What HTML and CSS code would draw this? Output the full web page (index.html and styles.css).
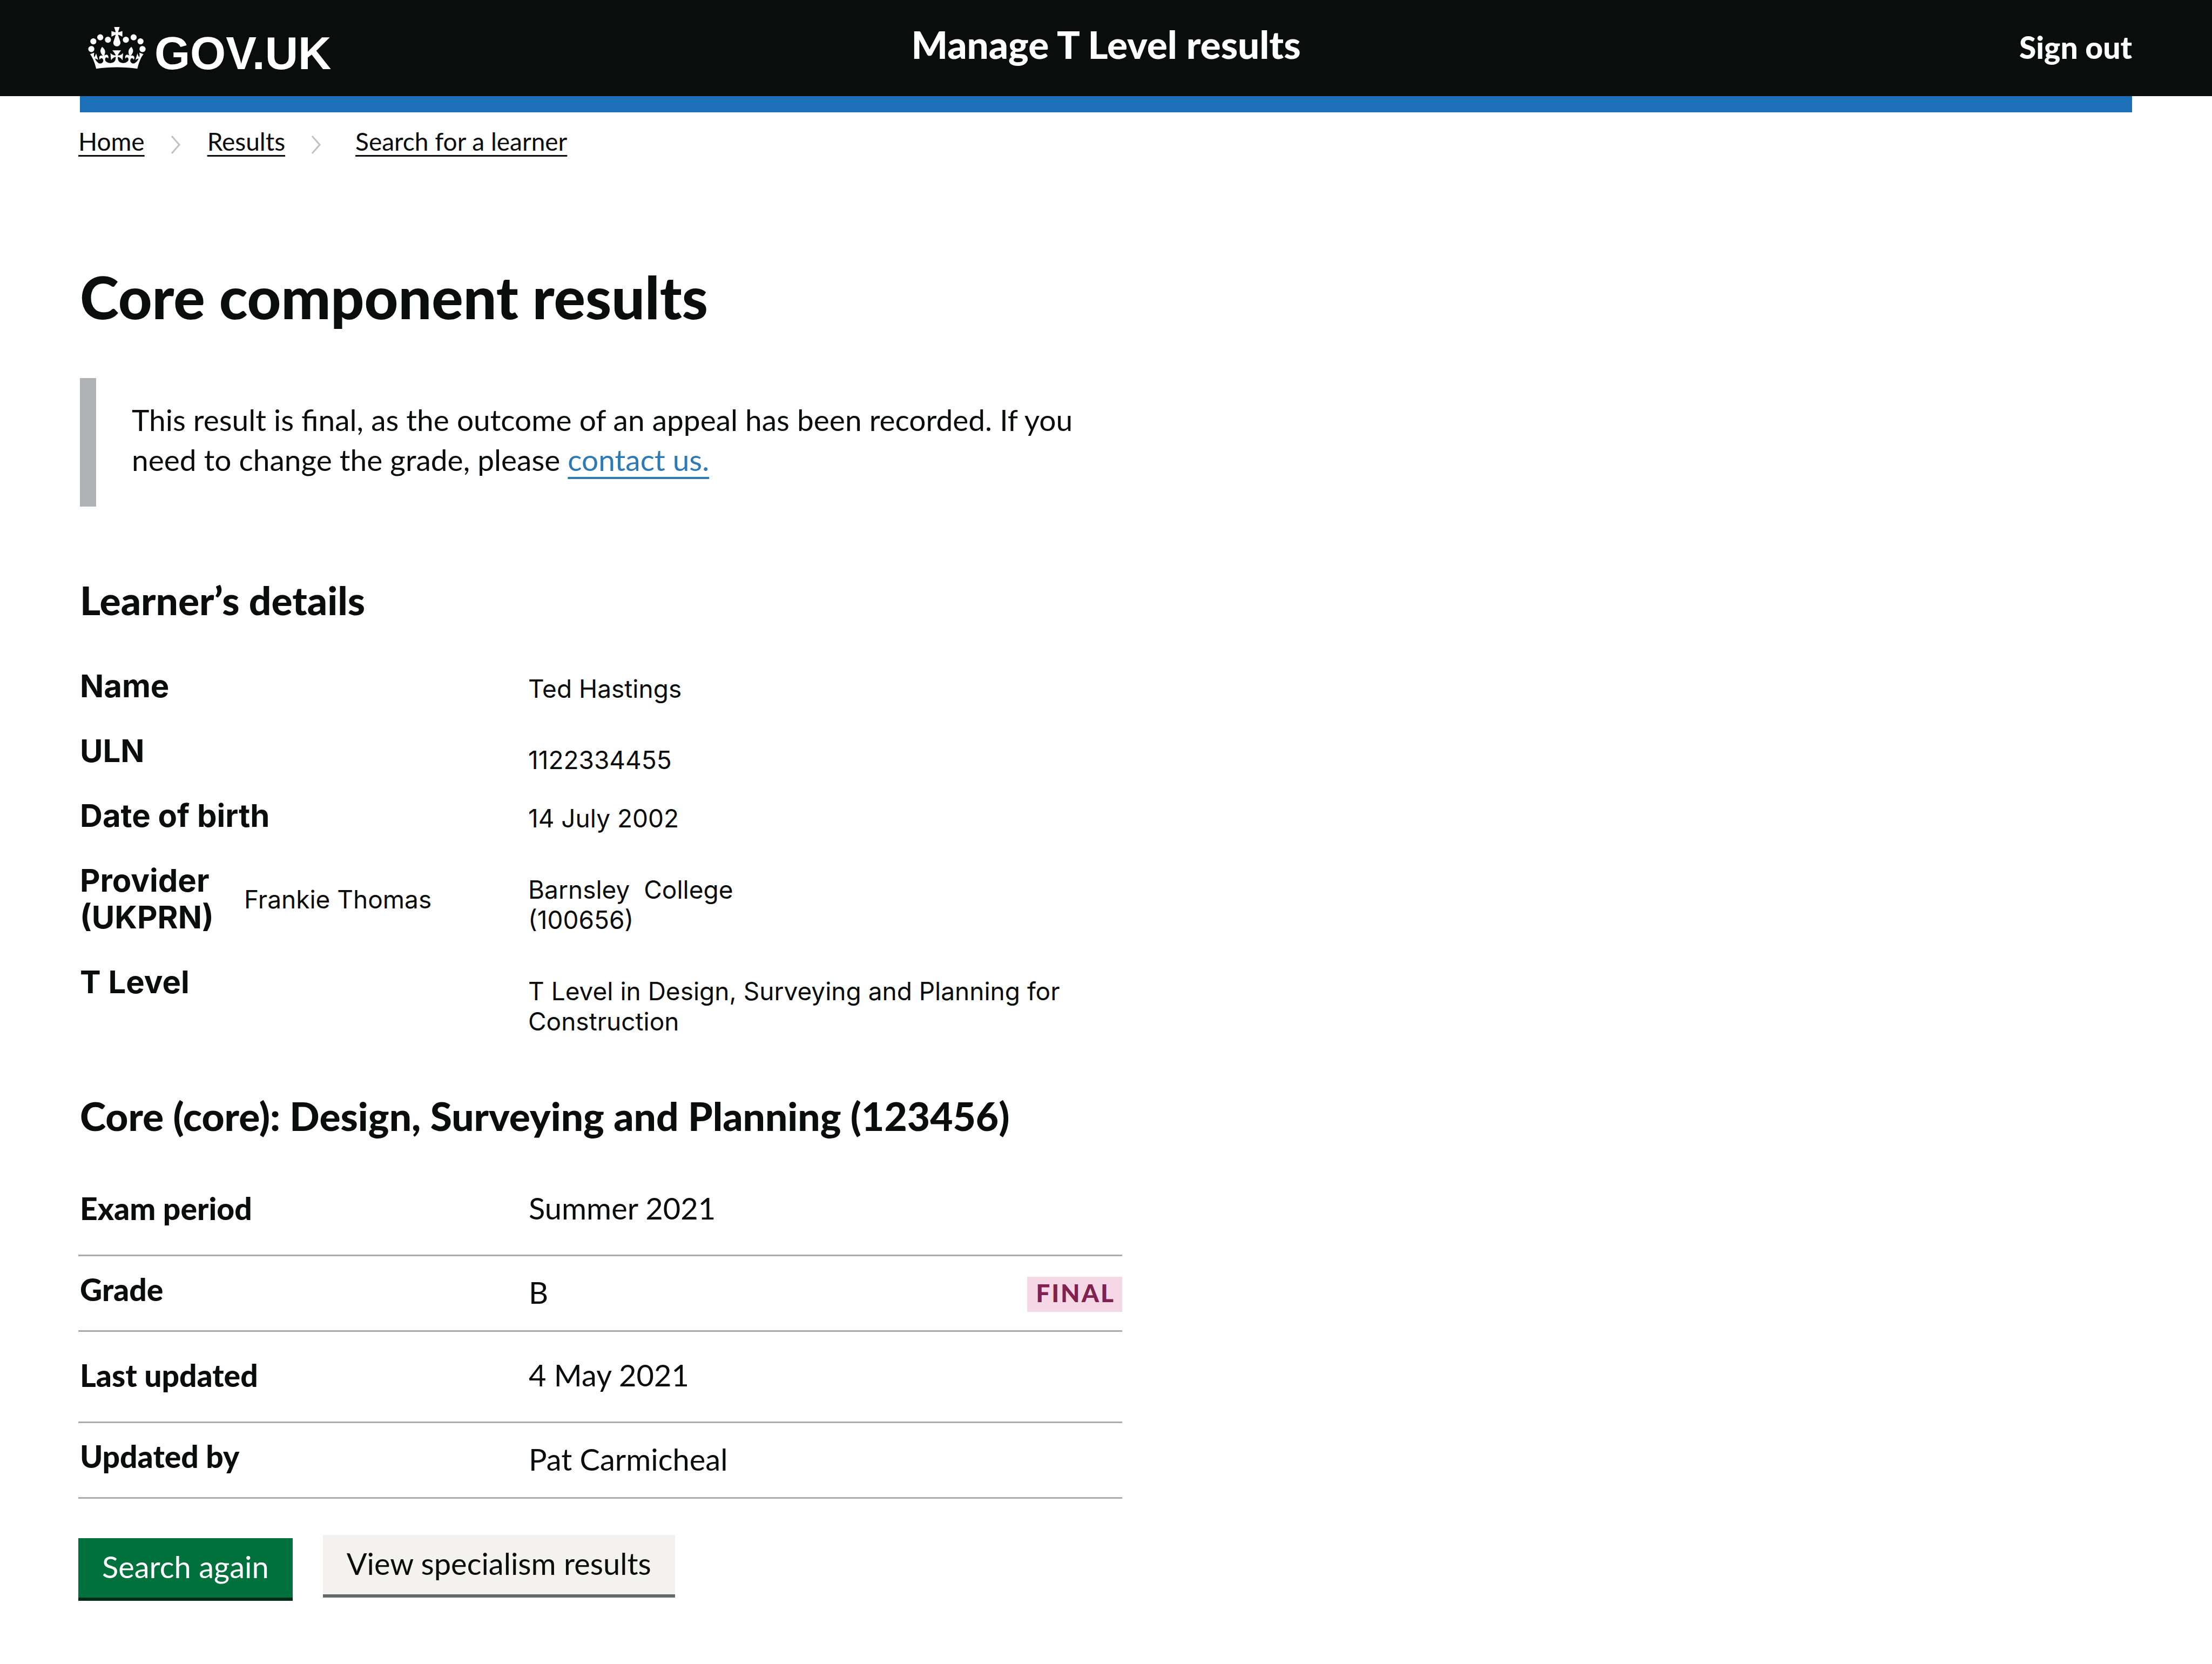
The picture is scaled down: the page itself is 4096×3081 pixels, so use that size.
FILE: index.html
```html
<!DOCTYPE html>
<html lang="en">
<head>
<meta charset="utf-8">
<title>Core component results – Manage T Level results – GOV.UK</title>
<link rel="stylesheet" href="styles.css">
</head>
<body>
<header class="header">
  <a class="logo" href="#">
    <svg class="logo__crown" viewBox="0 0 132 97" aria-hidden="true" focusable="false">
      <path fill="currentColor" fill-rule="evenodd" d="M25 30.2c3.5 1.5 7.7-.2 9.1-3.7 1.5-3.6-.2-7.8-3.9-9.2-3.6-1.4-7.6.3-9.1 3.9-1.4 3.5.3 7.5 3.9 9zM9 39.5c3.6 1.5 7.8-.2 9.2-3.7 1.5-3.6-.2-7.8-3.9-9.1-3.6-1.5-7.6.2-9.1 3.8-1.4 3.5.3 7.5 3.8 9zM4.4 57.2c3.5 1.5 7.7-.2 9.1-3.8 1.5-3.6-.2-7.7-3.9-9.1-3.5-1.5-7.6.3-9.1 3.8-1.4 3.5.3 7.6 3.9 9.1zm38.3-21.4c3.5 1.5 7.7-.2 9.1-3.8 1.5-3.6-.2-7.7-3.9-9.1-3.6-1.5-7.6.3-9.1 3.8-1.3 3.6.4 7.7 3.9 9.1zm64.4-5.6c-3.6 1.5-7.8-.2-9.1-3.7-1.5-3.6.2-7.8 3.8-9.2 3.6-1.4 7.7.3 9.2 3.9 1.3 3.5-.4 7.5-3.9 9zm15.9 9.3c-3.6 1.5-7.7-.2-9.1-3.7-1.5-3.6.2-7.8 3.7-9.1 3.6-1.5 7.7.2 9.2 3.8 1.5 3.5-.3 7.5-3.8 9zm4.7 17.7c-3.6 1.5-7.8-.2-9.2-3.8-1.5-3.6.2-7.7 3.9-9.1 3.6-1.5 7.7.3 9.2 3.8 1.3 3.5-.4 7.6-3.9 9.1zM89.3 35.8c-3.6 1.5-7.8-.2-9.2-3.8-1.4-3.6.2-7.7 3.9-9.1 3.6-1.5 7.7.3 9.2 3.8 1.4 3.6-.3 7.7-3.9 9.1zM69.7 17.7l8.9 4.7V9.3l-8.9 2.8c-.2-.3-.5-.6-.9-.9L72.4 0H59.6l3.5 11.2c-.3.3-.6.5-.9.9l-8.8-2.8v13.1l8.8-4.7c.3.3.6.7.9.9l-5 15.4v.1c-.2.8-.4 1.6-.4 2.4 0 4.1 3.1 7.5 7 8.1h.2c.3 0 .7.1 1 .1.4 0 .7 0 1-.1h.2c4-.6 7.1-4.1 7.1-8.1 0-.8-.1-1.7-.4-2.4V34l-5.1-15.4c.4-.2.7-.6 1-.9zM66 92.8c16.9 0 32.8 1.1 47.1 3.2 4-16.9 8.9-26.7 14-33.5l-9.6-3.4c1 4.9 1.1 7.2 0 10.2-1.5-1.4-3-4.3-4.2-8.7L108.6 76c2.8-2 5-3.2 7.5-3.3-4.4 9.4-10 11.9-13.6 11.2-4.3-.8-6.3-4.6-5.6-7.9 1-4.7 5.7-5.9 8-.5 4.3-8.7-3-11.4-7.6-8.8 7.1-7.2 7.9-13.5 2.1-21.1-8 6.1-8.1 12.3-4.5 20.8-4.7-5.4-12.1-2.5-9.5 6.2 3.4-5.2 7.9-2 7.2 3.1-.6 4.3-6.4 7.8-13.5 7.2-10.3-.9-10.9-8-11.2-13.8 2.5-.5 7.1 1.8 11 7.3L80.2 60c-4.1 4.4-8 5.3-12.3 5.4 1.4-4.4 8-11.6 8-11.6H55.5s6.4 7.2 7.9 11.6c-4.2-.1-8-1-12.3-5.4l1.4 16.4c3.9-5.5 8.5-7.7 10.9-7.3-.3 5.8-.9 12.8-11.1 13.8-7.2.6-12.9-2.9-13.5-7.2-.7-5 3.8-8.3 7.1-3.1 2.7-8.7-4.6-11.6-9.4-6.2 3.7-8.5 3.6-14.7-4.6-20.8-5.8 7.6-5 13.9 2.2 21.1-4.7-2.6-11.9.1-7.7 8.8 2.3-5.5 7.1-4.2 8.1.5.7 3.3-1.3 7.1-5.7 7.9-3.5.7-9-1.8-13.5-11.2 2.5.1 4.7 1.3 7.5 3.3l-4.7-15.4c-1.2 4.4-2.7 7.2-4.3 8.7-1.1-3-.9-5.3 0-10.2l-9.5 3.4c5 6.9 9.9 16.7 14 33.5 14.8-2.1 30.8-3.2 47.7-3.2z"/>
    </svg>
    <span>GOV.UK</span>
  </a>
  <a class="header__title" href="#">Manage T Level results</a>
  <a class="header__sign-out" href="#">Sign out</a>
</header>
<div class="header-bar"></div>

<div class="page">
  <nav aria-label="Breadcrumb">
    <ol class="breadcrumbs">
      <li class="breadcrumbs__item"><a class="breadcrumbs__link" href="#">Home</a></li>
      <li class="breadcrumbs__item">
        <svg class="breadcrumbs__chevron" viewBox="0 0 18 34" aria-hidden="true"><path d="M2 1 16 17 2 33"/></svg>
        <a class="breadcrumbs__link" href="#">Results</a>
      </li>
      <li class="breadcrumbs__item">
        <svg class="breadcrumbs__chevron" viewBox="0 0 18 34" aria-hidden="true"><path d="M2 1 16 17 2 33"/></svg>
        <a class="breadcrumbs__link" href="#">Search for a learner</a>
      </li>
    </ol>
  </nav>

  <main class="main">
    <h1 class="title">Core component results</h1>

    <p class="inset">This result is final, as the outcome of an appeal has been recorded. If you need to change the grade, please <a class="link" href="#">contact us.</a></p>

    <h2 class="heading">Learner’s details</h2>
    <dl class="details">
      <div class="details__row">
        <dt class="details__label">Name</dt>
        <dd class="details__value">Ted Hastings</dd>
      </div>
      <div class="details__row">
        <dt class="details__label">ULN</dt>
        <dd class="details__value details__value--low">1122334455</dd>
      </div>
      <div class="details__row">
        <dt class="details__label">Date of birth</dt>
        <dd class="details__value">14 July 2002</dd>
      </div>
      <div class="details__row details__row--split">
        <dt class="details__label">Provider (UKPRN)</dt>
        <dd class="details__value details__value--middle">Frankie Thomas</dd>
        <dd class="details__value details__value--low">Barnsley&nbsp; College<br>(100656)</dd>
      </div>
      <div class="details__row">
        <dt class="details__label">T Level</dt>
        <dd class="details__value details__value--low">T Level in Design, Surveying and Planning for Construction</dd>
      </div>
    </dl>

    <h2 class="heading">Core (core): Design, Surveying and Planning (123456)</h2>
    <table class="summary">
      <tbody>
        <tr class="summary__row summary__row--tall">
          <th scope="row">Exam period</th>
          <td>Summer 2021</td>
          <td></td>
        </tr>
        <tr class="summary__row">
          <th scope="row">Grade</th>
          <td>B</td>
          <td class="summary__status"><strong class="tag">FINAL</strong></td>
        </tr>
        <tr class="summary__row summary__row--tall">
          <th scope="row">Last updated</th>
          <td>4 May 2021</td>
          <td></td>
        </tr>
        <tr class="summary__row">
          <th scope="row">Updated by</th>
          <td>Pat Carmicheal</td>
          <td></td>
        </tr>
      </tbody>
    </table>

    <div class="actions">
      <button class="button button--primary" type="button">Search again</button>
      <button class="button button--secondary" type="button">View specialism results</button>
    </div>
  </main>
</div>
</body>
</html>
```
FILE: styles.css
```css
:root {
  --ink: #0b0c0c;
  --transport: Lato, "Liberation Sans", sans-serif;
  --work: Inter, "Liberation Sans", sans-serif;
}

* {
  box-sizing: border-box;
}

body {
  margin: 0;
  background: #fff;
  color: var(--ink);
  font-family: var(--transport);
  font-size: 55px;
}

/* Header */
.header {
  display: grid;
  grid-template-columns: 1fr auto 1fr;
  align-items: baseline;
  min-height: 178px;
  padding: 46px 148px 0;
  background: var(--ink);
  color: #fff;
  font-weight: 900;
  line-height: 72px;
}

.header a {
  color: inherit;
  text-decoration: none;
}

.logo {
  display: flex;
  align-self: start;
  align-items: baseline;
  gap: 16px;
  padding: 4px 0 0 15px;
  font-family: "Liberation Sans", sans-serif;
  font-size: 85px;
  line-height: 78px;
}

.logo__crown {
  width: 107px;
  height: 78px;
}

.header__title {
  font-size: 71px;
}

.header__sign-out {
  justify-self: end;
  font-size: 57px;
}

.header-bar {
  height: 30px;
  margin: 0 148px;
  background: #1d70b8;
}

.page {
  padding: 26px 145px 116px;
}

/* Breadcrumbs */
.breadcrumbs {
  display: flex;
  gap: 48px;
  margin: 0;
  padding: 0;
  list-style: none;
  font-size: 46px;
  line-height: 56px;
}

.breadcrumbs__item {
  display: flex;
  align-items: center;
  gap: 50px;
}

.breadcrumbs__item:last-child {
  gap: 64px;
}

.breadcrumbs__chevron {
  width: 18px;
  height: 34px;
  margin-top: 12px;
  fill: none;
  stroke: #bfc1c3;
  stroke-width: 3;
}

.breadcrumbs__link {
  color: inherit;
  text-decoration: underline;
  text-decoration-thickness: 3px;
  text-underline-offset: 8px;
  text-decoration-skip-ink: none;
}

/* Content column */
.main {
  max-width: 1933px;
}

.title {
  margin: 195px 0 87px 3px;
  font-size: 109px;
  font-weight: 900;
  line-height: 128px;
}

.heading {
  margin: 0 0 0 3px;
  font-size: 73px;
  font-weight: 900;
  line-height: 80px;
}

.inset {
  margin: 0 0 133px 3px;
  padding: 40px 0 50px 66px;
  border-left: 30px solid #b1b4b6;
  line-height: 74px;
}

.link {
  color: #2e7ab5;
  text-decoration: underline;
  text-decoration-thickness: 4px;
  text-underline-offset: 11px;
  text-decoration-skip-ink: none;
}

/* Learner's details */
.details {
  margin: 85px 0 107px 3px;
  font-family: var(--work);
}

.details__row {
  display: grid;
  grid-template-columns: 830px 1fr;
  align-items: start;
}

.details__row--split {
  grid-template-columns: 304px 526px 1fr;
}

.details__label {
  padding-bottom: 52px;
  font-size: 58px;
  font-weight: 700;
  line-height: 68px;
}

.details__value {
  margin: 0;
  padding-top: 11px;
  font-size: 46px;
  line-height: 56px;
}

.details__value--low {
  padding-top: 23px;
}

.details__value--middle {
  padding-top: 41px;
}

/* Result summary */
.summary {
  width: 100%;
  margin-top: 51px;
  border-collapse: separate;
  border-spacing: 0;
  line-height: 60px;
}

.summary th,
.summary td {
  padding: 31px 0 46px;
  border-bottom: 3px solid #a9abac;
  text-align: left;
  vertical-align: top;
}

.summary th {
  width: 834px;
  padding-left: 3px;
  font-size: 57px;
  font-weight: 900;
}

.summary td {
  padding-top: 37px;
  padding-bottom: 40px;
  font-size: 56px;
}

.summary__row--tall th,
.summary .summary__row--tall td {
  padding-top: 50px;
  padding-bottom: 56px;
}

.summary .summary__status {
  padding: 0;
  text-align: right;
  vertical-align: middle;
}

.tag {
  display: inline-block;
  padding: 0 13px 5px 16px;
  background: #f6d7e5;
  color: #80224d;
  font-size: 46px;
  font-weight: 900;
  letter-spacing: 3px;
  line-height: 60px;
  vertical-align: middle;
}

/* Buttons */
.actions {
  display: flex;
  align-items: flex-start;
  gap: 56px;
  margin-top: 67px;
}

.button {
  padding: 16px 44px 20px;
  border: 0;
  border-bottom: 6px solid;
  font-family: inherit;
  font-size: 56px;
  line-height: 74px;
}

.button--primary {
  margin-top: 6px;
  border-color: #002d18;
  background: #00703c;
  color: #fff;
}

.button--secondary {
  border-color: #626a6e;
  background: #f3f2f1;
  color: var(--ink);
}
```
